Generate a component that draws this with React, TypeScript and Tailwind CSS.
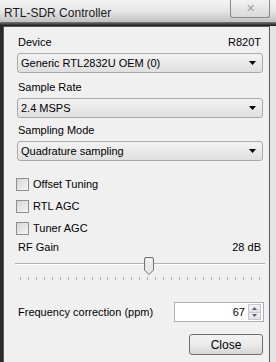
import React from 'react';

const font = { fontFamily: '"Liberation Sans", Arial, sans-serif' };

const Combo: React.FC<{ value: string }> = ({ value }) => (
  <div className="ml-[13px] mr-[6px] h-[20px] flex items-center justify-between rounded-[3px] border border-[#a9a9a9] bg-gradient-to-b from-[#f3f3f3] to-[#dfdfdf] pl-[3px] pr-[6px] text-black">
    <span>{value}</span>
    <svg width="7" height="4" viewBox="0 0 7 4">
      <path d="M0 0h7L3.5 4z" fill="#000" />
    </svg>
  </div>
);

const Check: React.FC<{ label: string }> = ({ label }) => (
  <div className="flex items-center gap-[4px] pl-[12px] h-[13px] leading-[13px] text-black">
    <div className="w-[13px] h-[13px] border border-[#8e8f8f] bg-gradient-to-br from-[#d4d4d4] to-[#f7f7f7]" />
    <span>{label}</span>
  </div>
);

const App: React.FC = () => {
  const ticks = Array.from({ length: 31 });
  return (
    <div className="w-[276px] h-[362px] flex flex-col bg-[#2a2a2a] overflow-hidden" style={font}>
      {/* Title bar */}
      <div className="h-[22px] flex items-start justify-between bg-gradient-to-b from-[#f4f4f4] via-[#e6e6e6] to-[#c2c2c2] pl-[4px]">
        <span className="mt-[4px] text-[12px] text-[#1a1a1a]">RTL-SDR Controller</span>
        <div className="mr-[6px] w-[40px] h-[18px] rounded-b-[3px] border border-t-0 border-[#8a8a8a] bg-gradient-to-b from-[#f2f2f2] to-[#dadada] flex items-center justify-center">
          <span className="text-[11px] text-[#a0a0a0] leading-none">✕</span>
        </div>
      </div>
      <div className="h-[4px] bg-gradient-to-b from-[#7a7a7a] to-[#1a1a1a]" />
      {/* Body */}
      <div className="flex-1 flex pl-[3px]">
        <div className="flex-1 border-t border-l border-r border-[#5a5a5a] bg-[#f0f0f0] flex flex-col text-[11px] text-black">
          <div className="flex justify-between pl-[14px] pr-[8px] mt-[9px] leading-[13px]">
            <span>Device</span>
            <span>R820T</span>
          </div>
          <div className="h-[4px]" />
          <Combo value="Generic RTL2832U OEM (0)" />
          <div className="pl-[14px] mt-[8px] mb-[4px] leading-[13px]">Sample Rate</div>
          <Combo value="2.4 MSPS" />
          <div className="pl-[14px] mt-[6px] mb-[4px] leading-[13px]">Sampling Mode</div>
          <Combo value="Quadrature sampling" />
          <div className="flex flex-col gap-[9px] mt-[17px]">
            <Check label="Offset Tuning" />
            <Check label="RTL AGC" />
            <Check label="Tuner AGC" />
          </div>
          <div className="flex justify-between pl-[14px] pr-[8px] mt-[6px] leading-[13px]">
            <span>RF Gain</span>
            <span>28 dB</span>
          </div>
          {/* Slider */}
          <div className="relative ml-[11px] mr-[4px] h-[28px]">
            <div className="absolute left-0 right-0 top-[9px] h-[2px] border-t border-[#b4b4b4] border-b border-b-[#ffffff]" />
            <svg className="absolute left-[129px] top-[3px]" width="10" height="18" viewBox="0 0 10 18">
              <path d="M0.5 2a1.5 1.5 0 0 1 1.5-1.5h6a1.5 1.5 0 0 1 1.5 1.5v11l-4.5 4.5l-4.5-4.5z" fill="#e9e9e9" stroke="#707070" />
              <path d="M2 3h6" stroke="#ffffff" />
            </svg>
            <div className="absolute left-[5px] right-[5px] top-[23px] flex justify-between">
              {ticks.map((_, i) => (
                <div key={i} className="w-px h-[3px] bg-[#a8a8a8]" />
              ))}
            </div>
          </div>
          <div className="flex items-center justify-between pl-[14px] pr-[5px] mt-[20px]">
            <span>Frequency correction (ppm)</span>
            <div className="w-[90px] h-[20px] border border-[#abadb3] bg-white flex items-center justify-end">
              <span className="pr-[3px]">67</span>
              <div className="w-[13px] h-[16px] mr-[2px] flex flex-col border border-[#c8c8c8]">
                <div className="flex-1 bg-gradient-to-b from-[#f4f4f4] to-[#e0e0e0] flex items-center justify-center border-b border-[#c8c8c8]">
                  <svg width="5" height="3" viewBox="0 0 5 3"><path d="M0 3h5L2.5 0z" fill="#4d6185" /></svg>
                </div>
                <div className="flex-1 bg-gradient-to-b from-[#f4f4f4] to-[#e0e0e0] flex items-center justify-center">
                  <svg width="5" height="3" viewBox="0 0 5 3"><path d="M0 0h5L2.5 3z" fill="#4d6185" /></svg>
                </div>
              </div>
            </div>
          </div>
          <div className="flex justify-end pr-[6px] mt-[12px]">
            <div className="w-[74px] h-[21px] rounded-[3px] border border-[#707070] bg-gradient-to-b from-[#f2f2f2] via-[#ebebeb] to-[#d6d6d6] flex items-center justify-center text-[12px]">
              Close
            </div>
          </div>
        </div>
        <div className="w-[6px] bg-[#e4e4e4]" />
      </div>
    </div>
  );
};

export default App;
